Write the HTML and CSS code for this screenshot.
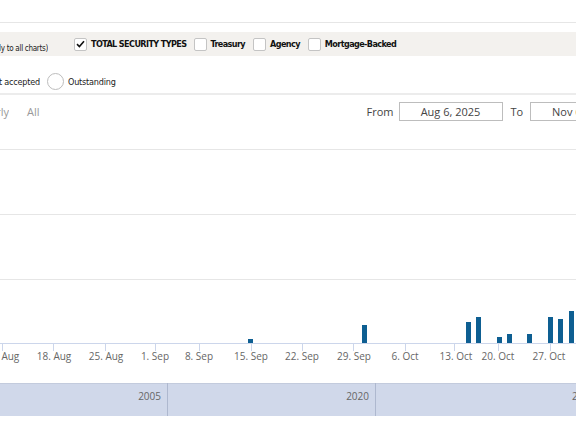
FILE: index.html
```html
<!DOCTYPE html>
<html lang="en">

<head>
    <meta charset="UTF-8">
    <title>Auction results</title>
    <link rel="stylesheet" href="styles.css">
</head>

<body>

    <div class="topbar"></div>

    <div class="filters">
        <span class="clip note">Security Type (Filters apply to all charts)</span>
        <label class="opt first">
            <span class="box"><svg width="9" height="8" viewBox="0 0 9 8"><path d="M1 4.2 L3.4 6.5 L8 1.2" fill="none" stroke="#111" stroke-width="1.6"/></svg></span>
            TOTAL SECURITY TYPES
        </label>
        <label class="opt"><span class="box"></span>Treasury</label>
        <label class="opt"><span class="box"></span>Agency</label>
        <label class="opt"><span class="box"></span>Mortgage-Backed</label>
    </div>

    <div class="measure">
        <span class="clip amount">Amount accepted</span>
        <label class="opt radio-opt"><span class="radio"></span>Outstanding</label>
    </div>

    <div class="range">
        <span class="clip period">Yearly</span>
        <span class="btn">All</span>
        <span class="lbl from">From</span>
        <span class="datebox">Aug 6, 2025</span>
        <span class="lbl to">To</span>
        <span class="datebox">Nov 6, 2025</span>
    </div>

    <svg class="chart" width="576" height="300" viewBox="0 0 576 300">
        <!-- grid -->
        <g stroke="#e6e6e6" stroke-width="1">
            <line x1="0" y1="19.5" x2="576" y2="19.5" />
            <line x1="0" y1="84.5" x2="576" y2="84.5" />
            <line x1="0" y1="149.5" x2="576" y2="149.5" />
        </g>

        <!-- bars -->
        <g fill="#0e5f92">
            <rect x="248" y="209" width="5" height="4" />
            <rect x="362" y="195" width="5" height="18" />
            <rect x="466" y="192" width="5" height="21" />
            <rect x="476" y="187" width="5" height="26" />
            <rect x="497" y="207" width="5" height="6" />
            <rect x="507" y="204" width="5" height="9" />
            <rect x="527" y="204" width="5" height="9" />
            <rect x="548" y="187" width="5" height="26" />
            <rect x="558" y="189" width="5" height="24" />
            <rect x="569" y="181" width="5" height="32" />
        </g>

        <!-- x axis -->
        <line x1="0" y1="213.5" x2="576" y2="213.5" stroke="#ccd6eb" />
        <g stroke="#ccd6eb">
            <line x1="2.5" y1="213" x2="2.5" y2="221" />
            <line x1="53.5" y1="213" x2="53.5" y2="221" />
            <line x1="105.5" y1="213" x2="105.5" y2="221" />
            <line x1="155.5" y1="213" x2="155.5" y2="221" />
            <line x1="199.5" y1="213" x2="199.5" y2="221" />
            <line x1="251.5" y1="213" x2="251.5" y2="221" />
            <line x1="302.5" y1="213" x2="302.5" y2="221" />
            <line x1="353.5" y1="213" x2="353.5" y2="221" />
            <line x1="405.5" y1="213" x2="405.5" y2="221" />
            <line x1="454.5" y1="213" x2="454.5" y2="221" />
            <line x1="498.5" y1="213" x2="498.5" y2="221" />
            <line x1="550.5" y1="213" x2="550.5" y2="221" />
        </g>
        <g class="axis-labels" text-anchor="middle">
            <text x="2" y="230">11. Aug</text>
            <text x="54" y="230">18. Aug</text>
            <text x="106" y="230">25. Aug</text>
            <text x="155" y="230">1. Sep</text>
            <text x="199" y="230">8. Sep</text>
            <text x="251" y="230">15. Sep</text>
            <text x="302" y="230">22. Sep</text>
            <text x="354" y="230">29. Sep</text>
            <text x="405" y="230">6. Oct</text>
            <text x="456" y="230">13. Oct</text>
            <text x="498" y="230">20. Oct</text>
            <text x="549" y="230">27. Oct</text>
        </g>

        <!-- navigator -->
        <rect x="0" y="253" width="576" height="33" fill="#d0d8ea" />
        <line x1="0" y1="253.5" x2="576" y2="253.5" stroke="#c3cbdd" />
        <g stroke="#aeb8cf">
            <line x1="167.5" y1="253" x2="167.5" y2="286" />
            <line x1="375.5" y1="253" x2="375.5" y2="286" />
        </g>
        <g class="nav-labels">
            <text x="161" y="270" text-anchor="end">2005</text>
            <text x="369" y="270" text-anchor="end">2020</text>
            <text x="572" y="270">2025</text>
        </g>
    </svg>

</body></html>
```

FILE: styles.css
```css
body {
    margin: 0;
    width: 576px;
    height: 430px;
    overflow: hidden;
    background-color: white;
    font-family: "DejaVu Sans", "Liberation Sans", sans-serif;
    color: #222;
}

.topbar {
    height: 22px;
    border-bottom: 1px solid #e6e6e6;
}

/* text cut at the left edge of the view */
.clip {
    display: flex;
    justify-content: flex-end;
    overflow: hidden;
    white-space: nowrap;
    flex-shrink: 0;
}

.filters,
.measure {
    font-stretch: condensed;
}

.filters {
    margin-top: 9px;
    height: 24px;
    background-color: #f3f1ee;
    display: flex;
    align-items: center;
    font-size: 9px;
    font-weight: bold;
    letter-spacing: -0.6px;
    white-space: nowrap;
    color: #111;
}

.note {
    width: 48px;
    font-size: 8px;
    font-weight: normal;
    letter-spacing: -0.3px;
    align-self: flex-end;
    padding-bottom: 3px;
    color: #222;
}

.opt {
    display: flex;
    align-items: center;
    gap: 4px;
    margin-left: 8px;
    flex-shrink: 0;
}

.opt.first {
    margin-left: 26px;
}

.opt.first + .opt {
    margin-left: 7px;
}

.box {
    width: 11px;
    height: 11px;
    border: 1px solid #c4c4c4;
    border-radius: 2px;
    background-color: white;
    display: flex;
    align-items: center;
    justify-content: center;
}

.measure {
    display: flex;
    align-items: center;
    padding-top: 17px;
    padding-bottom: 3px;
    border-bottom: 2px solid #ececec;
    font-size: 9px;
    letter-spacing: -0.2px;
}

.measure .opt {
    margin-left: 7px;
}

.amount {
    width: 40px;
}

.radio {
    width: 15px;
    height: 15px;
    border: 1px solid #bdbdbd;
    border-radius: 50%;
    background-color: white;
}

.range {
    display: flex;
    align-items: center;
    padding-top: 7px;
    padding-bottom: 9px;
    font-family: "Open Sans", sans-serif;
    font-size: 11px;
    color: #444;
    white-space: nowrap;
}

.period {
    width: 9px;
    color: #999;
}

.btn {
    margin-left: 18px;
    color: #999;
}

.lbl {
    flex-shrink: 0;
}

.from {
    margin-left: 327px;
    margin-right: 5px;
}

.to {
    margin-left: 8px;
    margin-right: 7px;
}

.datebox {
    flex-shrink: 0;
    width: 102px;
    height: 17px;
    border: 1px solid #bdbdbd;
    display: flex;
    align-items: center;
    justify-content: center;
}

.chart {
    display: block;
}

.axis-labels,
.nav-labels {
    font-family: "Open Sans", sans-serif;
    font-size: 10px;
    fill: #666;
}
```
